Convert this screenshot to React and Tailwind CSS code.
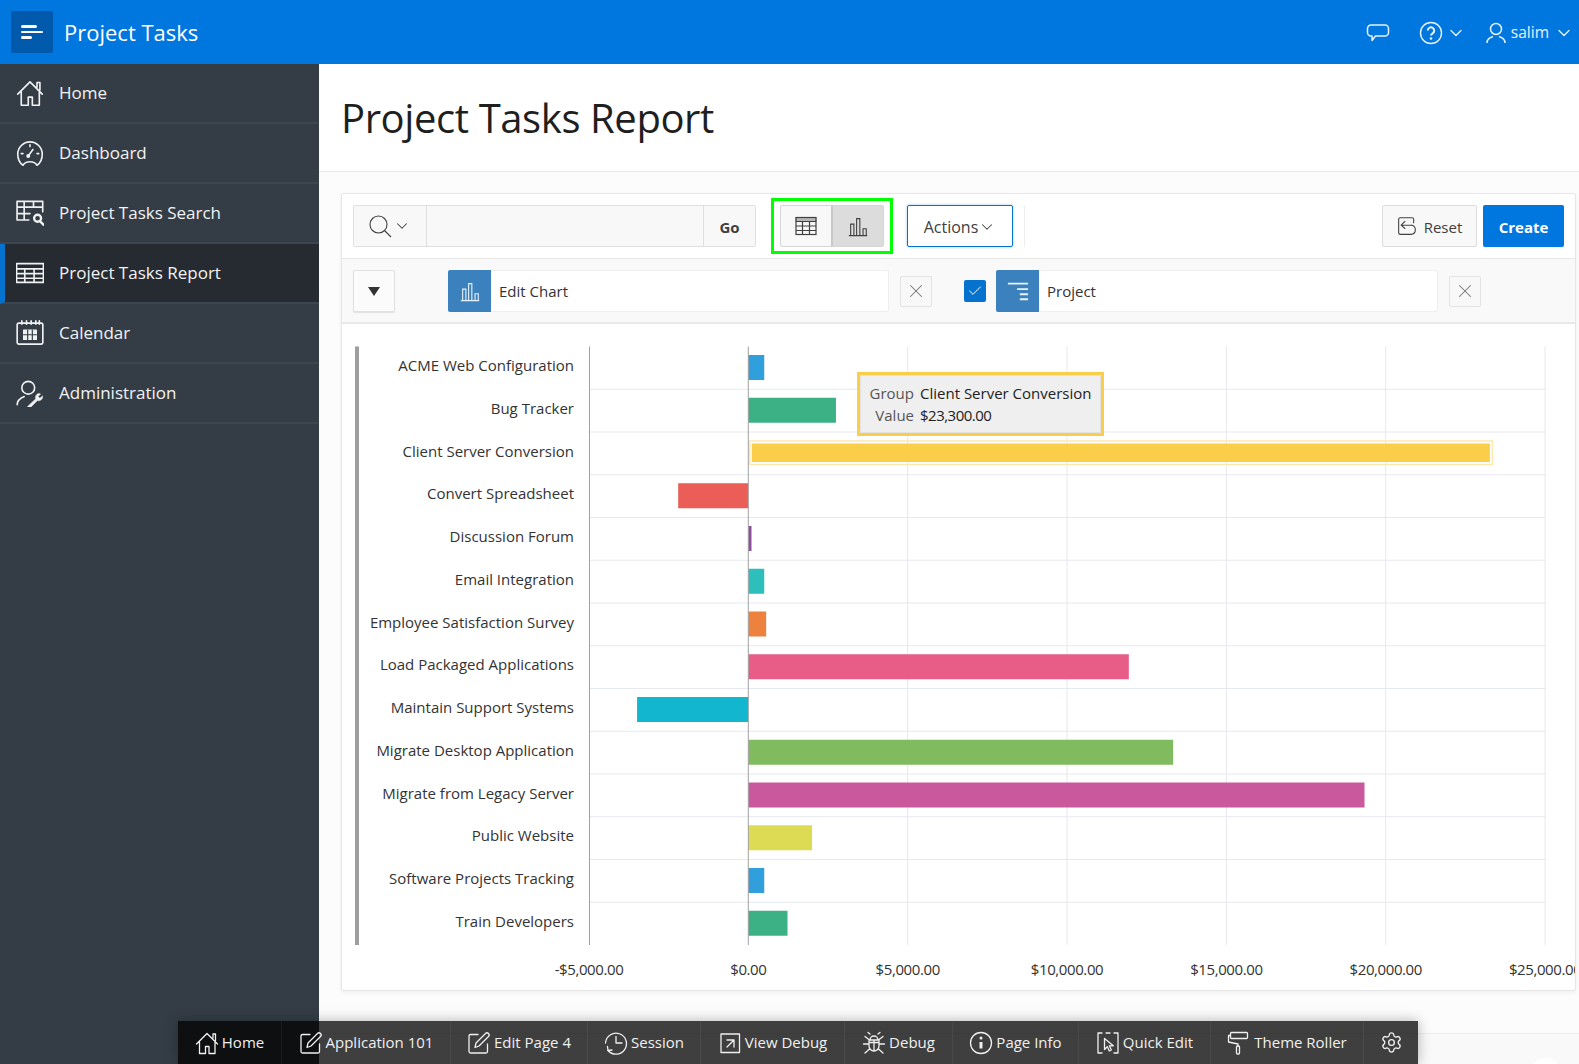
import React from 'react';
import { ChevronDown, X, Check, Settings } from 'lucide-react';

const FONT = { fontFamily: '"Open Sans", "Noto Sans", sans-serif' };

function Svg({ className, children, size = 24, sw = 1.5 }) {
  return (
    <svg width={size} height={size} viewBox="0 0 24 24" fill="none" stroke="currentColor" strokeWidth={sw} strokeLinecap="round" strokeLinejoin="round" className={className}>
      {children}
    </svg>
  );
}

const HomeIcon = (p) => (
  <Svg {...p}><path d="M1.500 13 12 2.500 22.500 13M4.500 11v11.500h6v-7h3.500v7h6V11M18 7V3h2.500v6.500" /></Svg>
);
const GaugeIcon = (p) => (
  <Svg {...p}><path d="M6 22.500C3.200 20.500 1.500 17 1.500 13a10.500 10.500 0 0 1 21 0c0 4-1.700 7.500-4.500 9.500-1-1.800-3-3-6-3s-5 1.200-6 3Z" /><path d="m10.500 14.500 4-5.500M12 5v1.500M4.500 12.500H6M18 12.500h1.500" /><circle cx="10.500" cy="14.500" r="1" fill="currentColor" /></Svg>
);
const TableSearchIcon = (p) => (
  <Svg {...p}><path d="M11 18H.9V2h22v9M.9 7h22M.9 12.500H12M7 2v16M15 2v5" /><circle cx="18.500" cy="16.500" r="3" strokeWidth="2" /><path d="m20.500 19 3 3" strokeWidth="2" /></Svg>
);
const TableIcon = (p) => (
  <Svg {...p}><path d="M.5 4h23v16H.5zM.5 8.500h23M.5 12.500h23M.5 16.500h23M7.500 8.500V20M15.500 8.500V20" /></Svg>
);
const CalendarIcon = (p) => (
  <Svg {...p}><rect x="1" y="3.500" width="22" height="18" rx="1.500" /><path d="M5 1.500v3M9 1.500v3M13 1.500v3M17 1.500v3M20 1.500v3" /><path d="M6.500 9.500h11v8h-11z" fill="currentColor" strokeWidth="1" /><path d="M10 9.500v8M14 9.500v8M6.500 13.500h11" stroke="#343d46" strokeWidth="1" /></Svg>
);
const AdminIcon = (p) => (
  <Svg {...p}><circle cx="10.500" cy="7.500" r="5.500" /><path d="M1 22c0-3.500 2.500-5.500 6-7" /><path d="m10 23.500 7-6.500c-.8-2 .5-4.500 3-4.500l1 .3-2 2.200 1.500 1.500 2.300-2c.4 2.600-2 4.800-4.500 4l-6.500 6.500z" fill="currentColor" strokeWidth="0.500" /></Svg>
);
const BarsIcon = ({ size = 24, className, sw = 1.2 }) => (
  <svg width={size} height={size} viewBox="0 0 24 24" fill="none" stroke="currentColor" strokeWidth={sw} className={className}>
    <path d="M2 22.500h20M4 22V10h3.500v12M10.500 22V4H14v18M17.500 22v-7H21v7" />
  </svg>
);
const EditIcon = (p) => (
  <Svg {...p}><path d="M11 3.500H3.500a1.500 1.500 0 0 0-1.500 1.500v15.500A1.500 1.500 0 0 0 3.500 22H19a1.500 1.500 0 0 0 1.500-1.500V13" /><path d="M8 16.500 9 12 18.500 2.500a2 2 0 0 1 3 3L12 15z" /></Svg>
);
const SessionIcon = (p) => (
  <Svg {...p}><path d="M4 19.500A10.500 10.500 0 1 0 1.500 12" /><path d="M12 5.500V12h6M3.500 15.500l.5 4 4-.5" /></Svg>
);
const ViewDebugIcon = (p) => (
  <Svg {...p}><path d="M3 3h18.500v18.500H3zM9 9h7v7M16 9l-7 7" /></Svg>
);
const BugIcon = (p) => (
  <Svg {...p}><path d="M7 9h10v6a5 5 0 0 1-10 0zM8 9a4 4 0 0 1 8 0M12 9v11M7 13H1.500M17 13h5.500M7.500 9 3 5.500M16.500 9 21 5.500M8 17.500l-5 4.500M16 17.500l5 4.500M8 3 6 1.500M16 3l2-1.500M7 11.500h10" /></Svg>
);
const InfoIcon = (p) => (
  <Svg {...p}><circle cx="12" cy="12" r="10.500" /><path d="M12 11v6.500" strokeWidth="3" strokeLinecap="butt" /><circle cx="12" cy="7" r="1.500" fill="currentColor" stroke="none" /></Svg>
);
const QuickEditIcon = (p) => (
  <Svg {...p}><path d="M6 2H2v20h4M18 2h4v20h-4M10 2h4" /><path d="M8.500 7.500v11l2.800-2.800 2 4.300 2-1-2-4.200h4z" /></Svg>
);
const RollerIcon = (p) => (
  <Svg {...p}><rect x="3.500" y="1.500" width="17" height="6" rx="1" /><path d="M3.500 4.500H1.500v6.500l9.500 2v2" /><rect x="9.500" y="15" width="3" height="8" rx="1" /></Svg>
);
const ResetIcon = (p) => (
  <Svg {...p}><path d="M8 2H4a2 2 0 0 0-2 2v16a2 2 0 0 0 2 2h4M8 2h10a2 2 0 0 1 2 2v4M8 22h9" /><path d="M9.500 6.500 5 11l4.500 4M5 11h12a5 5 0 0 1 5 5.500 5.500 5.500 0 0 1-5 5.500" /></Svg>
);
const ReverseLinesIcon = ({ size = 24, className }) => (
  <svg width={size} height={size} viewBox="0 0 24 24" fill="none" stroke="currentColor" strokeWidth="2" className={className}>
    <path d="M1 4h22M11 10h12M14 15.500h9M14 21h9" />
  </svg>
);

const navItems = [
  { label: 'Home', Icon: HomeIcon },
  { label: 'Dashboard', Icon: GaugeIcon },
  { label: 'Project Tasks Search', Icon: TableSearchIcon },
  { label: 'Project Tasks Report', Icon: TableIcon, active: true },
  { label: 'Calendar', Icon: CalendarIcon },
  { label: 'Administration', Icon: AdminIcon },
];

function Sidebar() {
  return (
    <aside className="w-[319px] shrink-0 bg-[#343d46] text-white">
      {navItems.map(({ label, Icon, active }) => (
        <div key={label} className={`flex items-center h-[60px] border-b-[2px] border-[#3d4650] ${active ? 'bg-[#262b31] border-l-[5px] border-l-[#0572ce] pl-[11px]' : 'pl-[16px]'}`}>
          <Icon size={28} className="text-[#f0f1f2]" sw={1.4} />
          <span className="ml-[15px] text-[17px] text-[#f2f3f4]">{label}</span>
        </div>
      ))}
    </aside>
  );
}

function Header() {
  return (
    <header className="flex items-center h-16 shrink-0 bg-[#0076df] text-white">
      <div className="ml-[11px] flex h-[42px] w-[42px] flex-col justify-center gap-[3px] rounded-[2px] bg-[#0059ab] pl-[10px]">
        <span className="block h-[3px] w-[16px] rounded-full bg-white" />
        <span className="block h-[2px] w-[22px] rounded-full bg-white" />
        <span className="block h-[3px] w-[11px] rounded-full bg-white" />
      </div>
      <span className="ml-[11px] text-[22px]">Project Tasks</span>
      <div className="ml-auto flex items-center pt-[1px] text-[#e6f2fc]">
        <svg width="24" height="22" viewBox="0 0 24 22" fill="none" stroke="currentColor" strokeWidth="1.500" strokeLinejoin="round">
          <path d="M5 3h14a3.500 3.500 0 0 1 3.500 3.500v4A3.500 3.500 0 0 1 19 14H9.500l-3.500 4.500V14H5a3.500 3.500 0 0 1-3.500-3.500v-4A3.500 3.500 0 0 1 5 3Z" />
        </svg>
        <svg width="24" height="24" viewBox="0 0 24 24" fill="none" stroke="currentColor" strokeWidth="1.400" className="ml-[29px]">
          <circle cx="12" cy="12" r="10.500" />
          <path d="M8.800 9.500a3.200 3.200 0 1 1 4.800 2.800c-1 .6-1.600 1.200-1.600 2.200" strokeWidth="2" />
          <circle cx="12" cy="17.500" r="1.300" fill="currentColor" stroke="none" />
        </svg>
        <ChevronDown size={20} className="ml-[3px]" strokeWidth={1.600} />
        <svg width="20" height="22" viewBox="0 0 20 22" fill="none" stroke="currentColor" strokeWidth="1.500" className="ml-[20px]">
          <circle cx="10" cy="7" r="5.500" />
          <path d="M1 21c0-4 2.500-5.500 6-6.500M19 21c0-4-2.500-5.500-6-6.500" />
        </svg>
        <span className="ml-[5px] text-[15.500px]">salim</span>
        <ChevronDown size={20} className="ml-[5px] mr-[5px]" strokeWidth={1.600} />
      </div>
    </header>
  );
}

function Toolbar() {
  return (
    <div className="flex items-center h-[65px] border-b border-[#e6e6e6] pl-[11px] pr-[11px]">
      <div className="flex h-[42px] w-[403px] rounded-[2px] border border-[#dfdfdf] bg-[#f8f8f8]">
        <div className="flex w-[73px] items-center border-r border-[#dfdfdf] pl-[14px] text-[#404040]">
          <svg width="24" height="24" viewBox="0 0 24 24" fill="none" stroke="currentColor" strokeWidth="1.100">
            <circle cx="10.500" cy="10.500" r="8.500" />
            <path d="m16.500 16.500 6.500 6.500" />
          </svg>
          <ChevronDown size={18} className="ml-[1px]" strokeWidth={1.400} />
        </div>
        <div className="flex-1" />
        <div className="flex w-[52px] items-center justify-center border-l border-[#dfdfdf] pt-[2px] text-[15px] font-bold text-[#404040]">Go</div>
      </div>
      <div className="ml-[15px] flex h-[56px] w-[122px] items-center justify-center border-[3px] border-[#00ff00]">
        <div className="flex h-[42px] w-[104px] rounded-[2px] border border-[#d5d5d5] bg-[#f8f8f8] text-[#404040]">
          <div className="flex w-[52px] items-center justify-center border-r-2 border-[#c8c8c8]">
            <svg width="22" height="20" viewBox="0 0 22 20" fill="none" stroke="currentColor" strokeWidth="1.200">
              <rect x="1" y="1.500" width="20" height="17" />
              <path d="M1 5.500h20M1 10h20M1 14.500h20M7.500 5.500v13M14.500 5.500v13" />
              <path d="M1 1.500h20v4H1z" fill="currentColor" opacity=".35" />
            </svg>
          </div>
          <div className="flex flex-1 items-center justify-center bg-[#dcdcdc]">
            <BarsIcon size={22} />
          </div>
        </div>
      </div>
      <div className="ml-[14px] flex h-[42px] w-[106px] items-center justify-center rounded-[2px] border border-[#0572ce] bg-white pt-[2px] text-[16px] text-[#404040] shadow-[0_0_3px_rgba(5,114,206,0.4)]">
        Actions
        <ChevronDown size={18} strokeWidth={1.400} />
      </div>
      <div className="ml-[11px] h-[42px] w-px bg-[#eeeeee]" />
      <div className="ml-auto flex h-[42px] w-[95px] items-center justify-center rounded-[2px] border border-[#dcdcdc] bg-[#f8f8f8] text-[15px] text-[#404040]">
        <ResetIcon size={20} sw={1.300} />
        <span className="ml-[7px] pt-[2px]">Reset</span>
      </div>
      <div className="ml-[6px] flex h-[42px] w-[81px] items-center justify-center rounded-[2px] bg-[#0076df] pt-[2px] text-[15px] font-bold text-white">
        Create
      </div>
    </div>
  );
}

function FilterRow() {
  return (
    <div className="flex items-center h-[65px] border-b-[2px] border-[#e8e8e8] bg-[#f9f9f9] pl-[11px] pt-[1px]">
      <div className="flex h-[42px] w-[42px] items-center justify-center rounded-[2px] border border-[#e0e0e0] bg-[#fbfbfb] shadow-[0_1px_1px_rgba(0,0,0,0.1)]">
        <span className="h-0 w-0 border-x-[6px] border-t-[9px] border-x-transparent border-t-[#333333]" />
      </div>
      <div className="ml-[53px] flex h-[42px] w-[441px] rounded-[2px] border border-[#eeeeee] bg-white">
        <div className="-m-px flex h-[42px] w-[43px] items-center justify-center rounded-l-[2px] bg-[#3a81bd] text-[#eaf2f9]">
          <BarsIcon size={22} />
        </div>
        <span className="ml-[9px] self-center pt-[1px] text-[15px] text-[#333333]">Edit Chart</span>
      </div>
      <div className="ml-[11px] flex h-[31px] w-[32px] items-center justify-center rounded-[2px] border border-[#e3e3e3] bg-[#f8f8f8] text-[#777777]">
        <X size={22} strokeWidth={1.100} />
      </div>
      <div className="ml-[32px] flex h-[22px] w-[22px] items-center justify-center rounded-[2px] bg-[#0572ce] text-white">
        <Check size={16} strokeWidth={1.500} />
      </div>
      <div className="ml-[10px] flex h-[42px] w-[442px] rounded-[2px] border border-[#eeeeee] bg-white">
        <div className="-m-px flex h-[42px] w-[43px] items-center justify-center rounded-l-[2px] bg-[#3a81bd] text-[#eaf2f9]">
          <ReverseLinesIcon size={22} />
        </div>
        <span className="ml-[9px] self-center pt-[1px] text-[15px] text-[#333333]">Project</span>
      </div>
      <div className="ml-[11px] flex h-[31px] w-[32px] items-center justify-center rounded-[2px] border border-[#e3e3e3] bg-[#f8f8f8] text-[#777777]">
        <X size={22} strokeWidth={1.100} />
      </div>
    </div>
  );
}

const ROW_TOP = 345.5;
const ROW_H = 42.75;
const ZERO = 748.3;
const PX = 159.35 / 5000;

const rows = [
  ['ACME Web Configuration', 500, '#309fdb'],
  ['Bug Tracker', 2750, '#3cb185'],
  ['Client Server Conversion', 23300, '#fbce4a'],
  ['Convert Spreadsheet', -2200, '#eb5d57'],
  ['Discussion Forum', 100, '#8e4f9f'],
  ['Email Integration', 500, '#2ebfbc'],
  ['Employee Satisfaction Survey', 560, '#ed813e'],
  ['Load Packaged Applications', 11940, '#e85d88'],
  ['Maintain Support Systems', -3490, '#13b6cf'],
  ['Migrate Desktop Application', 13330, '#81bb5f'],
  ['Migrate from Legacy Server', 19335, '#ca589d'],
  ['Public Website', 2000, '#dddb54'],
  ['Software Projects Tracking', 500, '#309fdb'],
  ['Train Developers', 1230, '#3cb185'],
];

const ticks = ['-$5,000.00', '$0.00', '$5,000.00', '$10,000.00', '$15,000.00', '$20,000.00', '$25,000.00'];

function Chart() {
  const bottom = ROW_TOP + ROW_H * rows.length;
  return (
    <div className="relative h-[666px]">
      <svg width="1233" height="666" className="block overflow-hidden">
        <g transform="translate(-342 -323)">
          {ticks.map((t, i) => i > 1 && (
            <line key={t} x1={ZERO + PX * 5000 * (i - 1)} x2={ZERO + PX * 5000 * (i - 1)} y1={ROW_TOP} y2={bottom} stroke="#e4e8ee" />
          ))}
          {rows.map((r, i) => i > 0 && (
            <line key={r[0]} x1="589" x2="1546" y1={ROW_TOP + ROW_H * i} y2={ROW_TOP + ROW_H * i} stroke="#e6e9ee" />
          ))}
          <rect x="355" y={ROW_TOP} width="4" height={bottom - ROW_TOP} fill="#9e9e9e" />
          <line x1="589.5" x2="589.5" y1={ROW_TOP} y2={bottom} stroke="#a0a0a0" />
          {rows.map(([label, value, color], i) => {
            const y = ROW_TOP + ROW_H * i;
            const w = Math.abs(value) * PX;
            const x = value < 0 ? ZERO - w : ZERO;
            const hi = label === 'Client Server Conversion';
            return (
              <g key={label}>
                <text x="574" y={y + 24.5} textAnchor="end" fontSize="15" fill="#333333">{label}</text>
                {hi ? (
                  <>
                    <rect x={x + 1.5} y={y + 9} width={w} height={23.5} fill="none" stroke="#fde9ae" strokeWidth="1.500" />
                    <rect x={x + 3.5} y={y + 11.5} width={w - 4.5} height={18.5} fill={color} />
                  </>
                ) : (
                  <rect x={x} y={y + 8.5} width={w} height={25} fill={color} />
                )}
              </g>
            );
          })}
          <line x1={ZERO} x2={ZERO} y1={ROW_TOP} y2={bottom} stroke="#a0a0a0" />
          {ticks.map((t, i) => (
            <text key={t} x={589 + PX * 5000 * i} y="974" textAnchor="middle" fontSize="15" letterSpacing="-0.4" fill="#333333">{t}</text>
          ))}
        </g>
      </svg>
      <div className="absolute left-[515px] top-[48px] flex h-[64px] w-[247px] flex-col justify-center border-[3px] border-[#fbce4a] bg-[#efefef] text-[15px] leading-[22px] outline outline-1 -outline-offset-4 outline-[#e2e2e2]">
        <div className="flex">
          <span className="w-[54px] text-right text-[#555555]">Group</span>
          <span className="ml-[6px] text-[#222222]">Client Server Conversion</span>
        </div>
        <div className="flex">
          <span className="w-[54px] text-right text-[#555555]">Value</span>
          <span className="ml-[6px] tracking-[-0.5px] text-[#222222]">$23,300.00</span>
        </div>
      </div>
    </div>
  );
}

const devItems = [
  { label: 'Home', Icon: HomeIcon, w: 'w-[104px]' },
  { label: 'Application 101', Icon: EditIcon, w: 'w-[169px]' },
  { label: 'Edit Page 4', Icon: EditIcon, w: 'w-[137px]' },
  { label: 'Session', Icon: SessionIcon, w: 'w-[113px]' },
  { label: 'View Debug', Icon: ViewDebugIcon, w: 'w-[144px]' },
  { label: 'Debug', Icon: BugIcon, w: 'w-[108px]' },
  { label: 'Page Info', Icon: InfoIcon, w: 'w-[126px]' },
  { label: 'Quick Edit', Icon: QuickEditIcon, w: 'w-[132px]' },
  { label: 'Theme Roller', Icon: RollerIcon, w: 'w-[153px]' },
];

function DevToolbar() {
  return (
    <div className="absolute bottom-0 left-[178px] flex h-[43px] w-[1240px] bg-black/75 text-[#f0f0f0] shadow-[0_0_12px_rgba(0,0,0,0.3)]">
      {devItems.map(({ label, Icon, w }) => (
        <div key={label} className={`flex items-center justify-center border-r border-white/5 text-[15px] ${w}`}>
          <Icon size={24} sw={1.300} />
          <span className="ml-[3px]">{label}</span>
        </div>
      ))}
      <div className="flex w-[54px] items-center justify-center">
        <Settings size={23} strokeWidth={1.400} />
      </div>
    </div>
  );
}

export default function App() {
  return (
    <div style={FONT} className="relative flex h-[1064px] w-[1579px] flex-col overflow-hidden bg-white">
      <Header />
      <div className="flex flex-1 overflow-hidden">
        <Sidebar />
        <main className="flex flex-1 flex-col bg-[#fcfcfc]">
          <div className="flex h-[108px] shrink-0 items-center border-b border-[#e8e8e8] bg-white pl-[22px]">
            <h1 className="text-[40px] font-normal tracking-[-0.4px] text-[#1f1f1f]">Project Tasks Report</h1>
          </div>
          <div className="mt-[21px] ml-[22px] mr-[5px] h-[798px] overflow-hidden rounded-[2px] border border-[#e6e6e6] bg-white shadow-[0_2px_4px_rgba(0,0,0,0.05)]">
            <Toolbar />
            <FilterRow />
            <Chart />
          </div>
          <div className="relative mt-[42px] flex-1 border-t border-[#eeeeee] bg-[#f9f9f9]">
            <div className="absolute left-[1212px] top-[24px] h-[30px] w-[30px] rounded-full bg-white" />
          </div>
        </main>
      </div>
      <DevToolbar />
    </div>
  );
}
